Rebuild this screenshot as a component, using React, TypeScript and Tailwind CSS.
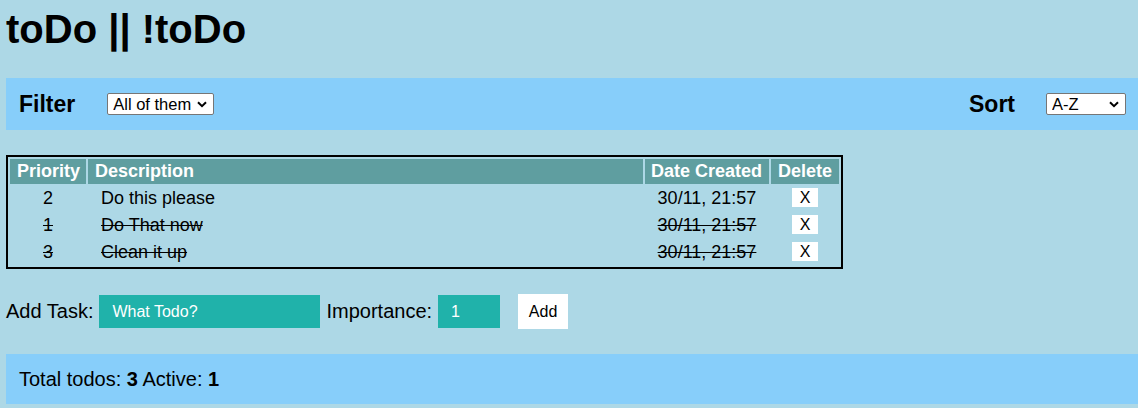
import { useState } from 'react';

type Todo = { id: number; priority: number; text: string; created: string; done: boolean };

const initialTodos: Todo[] = [
  { id: 1, priority: 2, text: 'Do this please', created: '30/11, 21:57', done: false },
  { id: 2, priority: 1, text: 'Do That now', created: '30/11, 21:57', done: true },
  { id: 3, priority: 3, text: 'Clean it up', created: '30/11, 21:57', done: true },
];

export default function App() {
  const [todos] = useState(initialTodos);
  const active = todos.filter((t) => !t.done).length;

  return (
    <div className="min-h-screen bg-[#ADD8E6] pl-[6px] pt-[6px] pb-[4px] font-['Liberation_Sans',Arial,sans-serif] text-black">
      <h1 className="text-[40px] font-bold leading-[46px]">toDo || !toDo</h1>

      <div className="mt-[26px] flex h-[52px] items-center justify-between bg-[#87CEFA] pl-[13px] pr-[12px]">
        <div className="flex items-center">
          <span className="mr-[32px] text-[23px] font-bold leading-[26px]">Filter</span>
          <Select value="All of them" width="w-[107px]" />
        </div>
        <div className="flex items-center">
          <span className="mr-[31px] text-[23px] font-bold leading-[26px]">Sort</span>
          <Select value="A-Z" width="w-[80px]" />
        </div>
      </div>

      <table className="mt-[25px] w-[837px] table-fixed border-separate border-spacing-[2px] border-2 border-black text-[18px] leading-[21px]">
        <thead>
          <tr className="h-[25px]">
            <th className="w-[76px] bg-[#5F9EA0] px-[7px] text-left font-bold text-white">Priority</th>
            <th className="bg-[#5F9EA0] px-[7px] text-left font-bold text-white">Description</th>
            <th className="w-[124px] bg-[#5F9EA0] px-[6px] text-left font-bold text-white">Date Created</th>
            <th className="w-[68px] bg-[#5F9EA0] px-[7px] text-left font-bold text-white">Delete</th>
          </tr>
        </thead>
        <tbody>
          {todos.map((t) => (
            <TodoRow key={t.id} todo={t} />
          ))}
        </tbody>
      </table>

      <div className="mt-[25px] flex h-[35px] items-center text-[20px] leading-[23px]">
        <span>Add Task:</span>
        <input
          className="ml-[6px] h-[33px] w-[221px] bg-[#20B2AA] pl-[13px] text-[16px] text-white outline-none placeholder:text-white"
          placeholder="What Todo?"
        />
        <span className="ml-[6px]">Importance:</span>
        <input
          className="ml-[6px] h-[33px] w-[62px] bg-[#20B2AA] pl-[13px] text-[16px] text-white outline-none"
          defaultValue="1"
        />
        <button className="ml-[18px] h-[35px] w-[50px] bg-white text-[16px] text-black">Add</button>
      </div>

      <div className="mt-[25px] flex h-[50px] items-center bg-[#87CEFA] px-[13px] text-[20px] leading-[23px]">
        <span>
          Total todos: <b className="font-bold">{todos.length}</b> Active: <b className="font-bold">{active}</b>
        </span>
      </div>
    </div>
  );
}

function Select({ value, width }: { value: string; width: string }) {
  return (
    <div className={`relative h-[22px] ${width}`}>
      <select
        defaultValue={value}
        className="h-[22px] w-full appearance-none rounded-[2px] border border-[#767676] bg-white pl-[5px] text-[16.5px] leading-[20px] text-black outline-none"
      >
        <option>{value}</option>
      </select>
      <svg
        className="pointer-events-none absolute right-[7px] top-[8px]"
        width="10"
        height="7"
        viewBox="0 0 10 7"
        fill="none"
      >
        <path d="M1 1.2 L5 5.2 L9 1.2" stroke="#000" strokeWidth="2" />
      </svg>
    </div>
  );
}

function TodoRow({ todo }: { todo: Todo }) {
  const strike = todo.done ? 'line-through' : '';
  return (
    <tr className="h-[25px]">
      <td className={`text-center ${strike}`}>{todo.priority}</td>
      <td className={`pl-[13px] ${strike}`}>{todo.text}</td>
      <td className={`text-center ${strike}`}>{todo.created}</td>
      <td className="pt-[1px] text-center align-top">
        <button className="h-[19px] w-[26px] bg-white text-[16px] leading-[19px] text-black">X</button>
      </td>
    </tr>
  );
}
